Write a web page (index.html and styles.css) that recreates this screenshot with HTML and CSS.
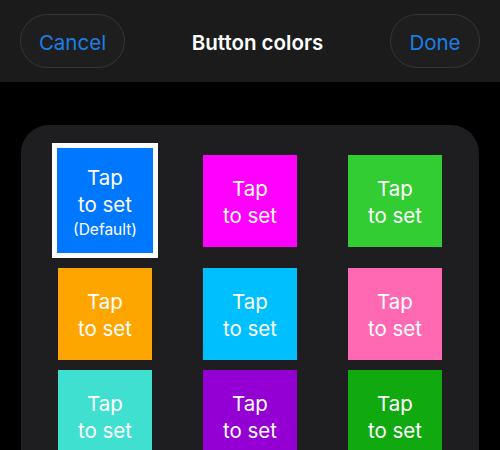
FILE: index.html
```html
<!DOCTYPE html>
<html>
<head>
<meta charset="utf-8">
<link rel="stylesheet" href="styles.css">
</head>
<body>
<header class="bar">
  <button class="pill pill-cancel">Cancel</button>
  <h1 class="title">Button colors</h1>
  <button class="pill pill-done">Done</button>
</header>
<main class="card">
  <div class="grid">
    <div class="swatch selected c-blue"><span>Tap</span><span>to set</span><span class="small">(Default)</span></div>
    <div class="swatch c-magenta"><span>Tap</span><span>to set</span></div>
    <div class="swatch c-lime"><span>Tap</span><span>to set</span></div>
    <div class="swatch c-orange"><span>Tap</span><span>to set</span></div>
    <div class="swatch c-sky"><span>Tap</span><span>to set</span></div>
    <div class="swatch c-pink"><span>Tap</span><span>to set</span></div>
    <div class="swatch c-turq"><span>Tap</span><span>to set</span></div>
    <div class="swatch c-violet"><span>Tap</span><span>to set</span></div>
    <div class="swatch c-green"><span>Tap</span><span>to set</span></div>
  </div>
</main>
</body>
</html>
```
FILE: styles.css
```css
* { box-sizing: border-box; }
html, body { margin: 0; padding: 0; }
body {
  background: #000;
  width: 500px;
  height: 450px;
  overflow: hidden;
  font-family: Inter, "Liberation Sans", sans-serif;
  color: #fff;
}
.bar {
  height: 82px;
  background: #1b1b1c;
  display: flex;
  align-items: center;
  justify-content: space-between;
  padding: 0 20px;
}
.pill {
  height: 54px;
  border-radius: 27px;
  border: 1px solid #363638;
  background: #1e1e1f;
  color: #1d7ee6;
  font-family: Inter, "Liberation Sans", sans-serif;
  font-size: 20.5px;
  padding: 3px 0 0;
}
.pill-cancel { width: 105px; }
.pill-done { width: 90px; }
.title {
  margin: 0;
  padding-top: 3px;
  font-size: 20.5px;
  font-weight: 600;
  color: #fff;
}
.card {
  margin: 43px 21px 0 21px;
  background: #1e1e20;
  border-radius: 28px;
  padding: 18px 0 40px;
}
.grid {
  display: grid;
  grid-template-columns: repeat(3, 145px);
  justify-content: center;
  justify-items: center;
  align-items: center;
  row-gap: 10px;
}
.swatch {
  width: 94px;
  height: 92px;
  display: flex;
  flex-direction: column;
  align-items: center;
  justify-content: center;
  font-size: 20.5px;
  line-height: 27px;
  color: #fff;
  padding-top: 2px;
}
.swatch.selected {
  width: 106px;
  height: 115px;
  border: 5px solid #fff;
  padding-top: 3px;
}
.small { font-size: 15.5px; line-height: 23px; }
.c-blue { background: #0077ff; }
.c-magenta { background: #ff00ff; }
.c-lime { background: #32cd32; }
.c-orange { background: #ffa500; }
.c-sky { background: #00bfff; }
.c-pink { background: #ff69b4; }
.c-turq { background: #40e0d0; }
.c-violet { background: #9400d3; }
.c-green { background: #10a910; }
```
